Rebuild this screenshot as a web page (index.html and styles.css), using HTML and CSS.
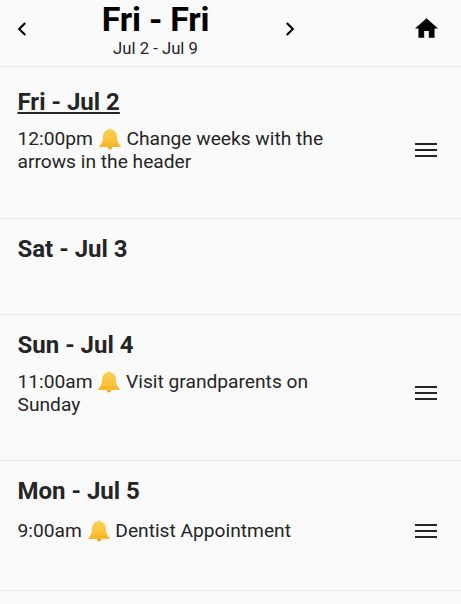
FILE: index.html
```html
<!DOCTYPE html>
<html lang="en">
<head>
<meta charset="utf-8">
<title>Week planner</title>
<link rel="stylesheet" href="styles.css">
</head>
<body>
<svg class="defs" width="0" height="0">
  <defs>
    <linearGradient id="gold" x1="0" y1="0" x2="0" y2="1"><stop offset="0" stop-color="#f9cf58"/><stop offset="0.6" stop-color="#fbc43a"/><stop offset="1" stop-color="#f6b92b"/></linearGradient>
    <symbol id="bell" viewBox="0 0 22 22">
      <circle cx="11" cy="19.4" r="2.1" fill="#eca820"/>
      <path d="M11 .4C9.900 .4 9.400 1 9.200 1.700 5.600 2.400 4.300 4.800 4.100 8c-.2 4-.6 6.200-2.400 8.200-.9 1-1.500 1.500-1.500 2.200 0 .5.500.7 1.100.7h19.400c.6 0 1.100-.2 1.100-.7 0-.7-.6-1.200-1.500-2.200-1.800-2-2.200-4.200-2.400-8.200-.2-3.200-1.500-5.600-5.100-6.300C12.600 1 12.100.4 11 .4Z" fill="url(#gold)"/>
      <path d="M2.300 16.200h17.400" stroke="#eda827" stroke-width=".7" opacity=".7"/>
    </symbol>
    <symbol id="handle" viewBox="0 0 22 16"><path d="M0 2h22M0 8h22M0 14h22" stroke="#252525" stroke-width="2"/></symbol>
  </defs>
</svg>
<header class="header">
  <svg class="prev" viewBox="0 0 10 14"><path d="M8.200 1 2.200 7l6 6" fill="none" stroke="#000" stroke-width="2.100"/></svg>
  <div class="range">
    <h1 class="title">Fri - Fri</h1>
    <div class="dates">Jul 2 - Jul 9</div>
  </div>
  <svg class="next" viewBox="0 0 10 14"><path d="m1.800 1 6 6-6 6" fill="none" stroke="#000" stroke-width="2.100"/></svg>
  <svg class="home" viewBox="2 3 20 17"><path d="M10 20v-6h4v6h5v-8h3L12 3 2 12h3v8z"/></svg>
</header>
<main>
  <section class="day day-tall">
    <h2 class="day-name today">Fri - Jul 2</h2>
    <div class="event"><p class="text">12:00pm <svg class="bell"><use href="#bell"/></svg> Change weeks with the arrows in the header</p><svg class="handle"><use href="#handle"/></svg></div>
  </section>
  <section class="day day-empty">
    <h2 class="day-name">Sat - Jul 3</h2>
  </section>
  <section class="day day-medium">
    <h2 class="day-name">Sun - Jul 4</h2>
    <div class="event"><p class="text">11:00am <svg class="bell"><use href="#bell"/></svg> Visit grandparents on Sunday</p><svg class="handle"><use href="#handle"/></svg></div>
  </section>
  <section class="day day-short">
    <h2 class="day-name">Mon - Jul 5</h2>
    <div class="event"><p class="text">9:00am <svg class="bell"><use href="#bell"/></svg> Dentist Appointment</p><svg class="handle"><use href="#handle"/></svg></div>
  </section>
</main>
</body>
</html>
```
FILE: styles.css
```css
* { box-sizing: border-box; }
body { margin: 0; height: 604px; overflow: hidden; background: #fafafa; color: #252525; font-family: Roboto, sans-serif; }
h1, h2, p { margin: 0; }
.defs { display: block; height: 0; }
.header { display: flex; height: 67px; border-bottom: 1px solid #e9e9e9; color: #000; }
.prev, .next { width: 10px; height: 14px; margin-top: 22px; }
.prev { margin-left: 17px; }
.range { width: 257px; margin-right: 1px; text-align: center; }
.title { font-size: 34px; line-height: 39px; letter-spacing: -.25px; }
.dates { font-size: 16.7px; line-height: 20px; color: #252525; }
.home { width: 23px; height: 20px; margin: 18px 0 0 120px; }
.day { padding: 20px 24px 0 17.5px; border-bottom: 1px solid #e8e8e8; }
.day-tall { height: 152px; padding-top: 21px; }
.day-empty { height: 96px; padding-top: 16px; }
.day-medium { height: 146px; padding-top: 16px; }
.day-short { height: 130px; padding-top: 16px; }
.day-name { font-size: 24px; line-height: 28px; }
.today { text-decoration: underline; text-decoration-thickness: 1.5px; text-underline-offset: 2px; }
.event { display: flex; justify-content: space-between; align-items: center; margin-top: 10.5px; }
.text { width: 318px; font-size: 19.2px; line-height: 23px; }
.day-short .event { margin-top: 14px; }
.bell { width: 22px; height: 22px; vertical-align: -4px; margin: -4px 1px; position: relative; top: -3px; }
.handle { width: 22px; height: 16px; }
```
